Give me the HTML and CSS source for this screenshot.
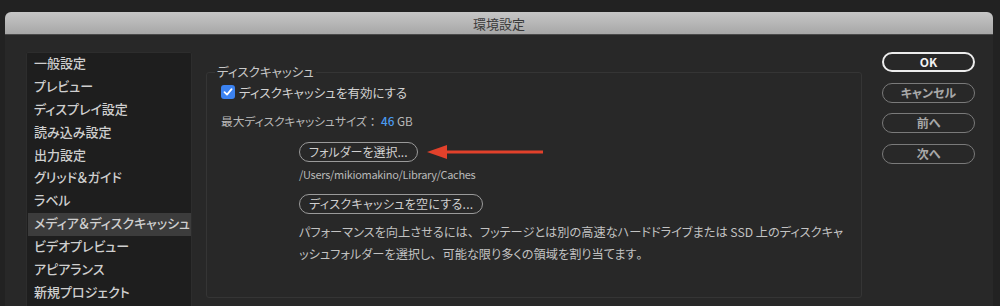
FILE: index.html
```html
<!DOCTYPE html>
<html lang="ja">
<head>
<meta charset="utf-8">
<title>環境設定</title>
<link rel="stylesheet" href="styles.css">
</head>
<body>
<div class="window">
  <div class="titlebar">環境設定</div>
  <div class="win-body">
    <ul class="sidebar">
      <li>一般設定</li>
      <li>プレビュー</li>
      <li>ディスプレイ設定</li>
      <li>読み込み設定</li>
      <li>出力設定</li>
      <li>グリッド＆ガイド</li>
      <li>ラベル</li>
      <li class="selected">メディア＆ディスクキャッシュ</li>
      <li>ビデオプレビュー</li>
      <li>アピアランス</li>
      <li>新規プロジェクト</li>
    </ul>
    <fieldset class="group">
      <legend>ディスクキャッシュ</legend>
      <div class="check-row">
        <span class="checkbox"><svg width="10" height="10" viewBox="0 0 10 10"><path d="M1.5 5.2 L4 7.6 L8.6 2.2" fill="none" stroke="#fff" stroke-width="1.8" stroke-linecap="round" stroke-linejoin="round"/></svg></span>
        <span>ディスクキャッシュを有効にする</span>
      </div>
      <div class="size-row">最大ディスクキャッシュサイズ<span class="fw">：</span> <span class="num">46</span> GB</div>
      <div class="indent">
        <div class="btn-row">
          <button class="pill">フォルダーを選択...</button>
          <svg class="arrow" width="118" height="16" viewBox="0 0 118 16"><path d="M16 8 H116" stroke="#e2412b" stroke-width="3"/><path d="M0 8 L20 1 L20 15 Z" fill="#e2412b"/></svg>
        </div>
        <div class="path">/Users/mikiomakino/Library/Caches</div>
        <button class="pill pill2">ディスクキャッシュを空にする...</button>
        <p class="desc">パフォーマンスを向上させるには<span class="fw">、</span>フッテージとは別の高速なハードドライブまたは SSD 上のディスクキャ<br>ッシュフォルダーを選択し<span class="fw">、</span>可能な限り多くの領域を割り当てます<span class="fw">。</span></p>
      </div>
    </fieldset>
    <div class="actions">
      <button class="act primary">OK</button>
      <button class="act">キャンセル</button>
      <button class="act">前へ</button>
      <button class="act">次へ</button>
    </div>
  </div>
</div>
</body>
</html>
```
FILE: styles.css
```css
html, body {
  margin: 0;
  padding: 0;
}
body {
  width: 1000px;
  height: 306px;
  overflow: hidden;
  background: #222222;
  font-family: "Noto Sans CJK JP", "Noto Sans", sans-serif;
  font-feature-settings: "palt";
  padding-top: 12px;
  box-sizing: border-box;
}
.fw {
  font-feature-settings: normal;
}
.window {
  margin: 0 7px 0 5px;
  border-radius: 6px 6px 0 0;
  background: #282828;
  height: 294px;
  overflow: hidden;
}
.titlebar {
  height: 22px;
  background: linear-gradient(#c6c6c6, #a7a7a7);
  border-bottom: 1px solid #4a4a4a;
  color: #3a3a3a;
  font-size: 13px;
  line-height: 23px;
  text-align: center;
}
.win-body {
  display: flex;
  align-items: flex-start;
  padding-top: 17px;
}
.sidebar {
  list-style: none;
  margin: 0 0 0 21px;
  padding: 0 0 0 1px;
  width: 166px;
  height: 262px;
  background: #1e1e1e;
  border: 1px solid #2d2d2d;
  border-radius: 2px;
  box-sizing: border-box;
}
.sidebar li {
  height: 22.9px;
  line-height: 20px;
  padding-left: 6px;
  font-size: 13px;
  font-weight: 500;
  color: #cfcfcf;
  white-space: nowrap;
}
.sidebar li.selected {
  background: #3c3c3c;
}
.group {
  margin: 12px 0 0 14px;
  width: 656px;
  height: 234px;
  box-sizing: border-box;
  border: 1px solid #353535;
  border-radius: 3px;
  padding: 0 0 0 14px;
}
.group legend {
  font-size: 12.5px;
  color: #c8c8c8;
  padding: 0 2px;
  margin-left: -6px;
  line-height: 16px;
}
.check-row {
  display: flex;
  align-items: center;
  gap: 4px;
  font-size: 12.5px;
  color: #d2d2d2;
  margin-top: 4px;
  height: 16px;
}
.checkbox {
  width: 14px;
  height: 14px;
  border-radius: 3px;
  background: #3b82f0;
  display: flex;
  align-items: center;
  justify-content: center;
}
.size-row {
  margin-top: 13px;
  font-size: 11.7px;
  color: #b9b9b9;
  line-height: 16px;
}
.size-row .num {
  color: #4a9bf0;
  font-weight: 500;
}
.indent {
  padding-left: 78px;
  display: flex;
  flex-direction: column;
  align-items: flex-start;
}
.btn-row {
  margin-top: 13px;
  display: flex;
  align-items: center;
  gap: 9px;
}
.pill {
  font-family: inherit;
  font-feature-settings: "palt";
  font-size: 12px;
  color: #d0d0d0;
  background: transparent;
  border: 1.5px solid #9a9a9a;
  border-radius: 10px;
  height: 20px;
  padding: 0 9px;
  line-height: 16px;
  box-sizing: border-box;
  white-space: nowrap;
}
.path {
  margin-top: 2px;
  font-size: 11px;
  letter-spacing: -0.3px;
  color: #b9b9b9;
  line-height: 20px;
}
.pill2 {
  margin-top: 10px;
  padding: 0 9px;
  letter-spacing: 0.3px;
}
.desc {
  margin: 7px 0 0;
  font-size: 12.2px;
  color: #c2c2c2;
  line-height: 22px;
  white-space: nowrap;
}
.actions {
  margin-left: 20px;
  width: 93px;
  display: flex;
  flex-direction: column;
  gap: 10.5px;
}
.act {
  font-family: inherit;
  font-feature-settings: "palt";
  height: 20px;
  border-radius: 10px;
  background: transparent;
  border: 1.5px solid #7a7a7a;
  color: #a8a8a8;
  font-size: 12px;
  font-weight: 700;
  line-height: 16px;
  padding: 0;
  box-sizing: border-box;
}
.act.primary {
  border: 2px solid #ececec;
  color: #f2f2f2;
}
```
